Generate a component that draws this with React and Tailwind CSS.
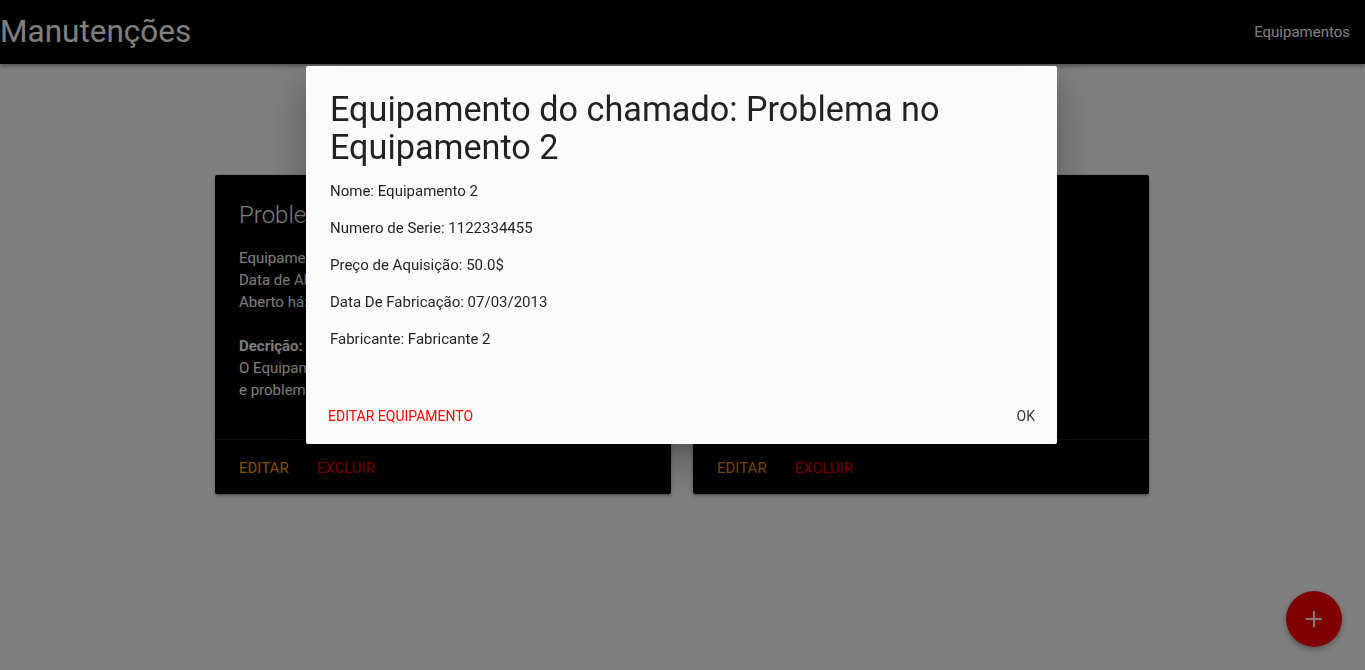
import React from 'react';

const chamados = [
  {
    id: 1,
    titulo: 'Problema no Equipamento 1',
    equipamento: 'Equipamento 1',
    abertura: '05/02/2019',
    aberto: '3 dias',
    descricao: ['O Equipamento 1 apresenta falhas constantes na operação', 'e problemas de aquecimento.'],
  },
  {
    id: 2,
    titulo: 'Problema no Equipamento 2',
    equipamento: 'Equipamento 2',
    abertura: '06/02/2019',
    aberto: '2 dias',
    descricao: ['O Equipamento 2 não liga', 'e problema na fonte.'],
  },
];

const detalhes = [
  'Nome: Equipamento 2',
  'Numero de Serie: 1122334455',
  'Preço de Aquisição: 50.0$',
  'Data De Fabricação: 07/03/2013',
  'Fabricante: Fabricante 2',
];

function ChamadoCard({ chamado }) {
  return (
    <div className="bg-black text-white rounded-[2px] shadow-[0_2px_2px_0_rgba(0,0,0,0.14),0_3px_1px_-2px_rgba(0,0,0,0.12),0_1px_5px_0_rgba(0,0,0,0.2)]">
      <div className="px-6 pt-6 pb-[38px] overflow-hidden">
        <div className="text-[24px] font-light leading-8 mb-4 whitespace-nowrap">{chamado.titulo}</div>
        <div className="text-[15px] leading-[22px] whitespace-nowrap">
          <p>Equipamento: {chamado.equipamento}</p>
          <p>Data de Abertura: {chamado.abertura}</p>
          <p>Aberto há: {chamado.aberto}</p>
          <p>&nbsp;</p>
          <p className="font-bold">Decrição:</p>
          <p>{chamado.descricao[0]}</p>
          <p>{chamado.descricao[1]}</p>
        </div>
      </div>
      <div className="border-t border-[rgba(160,160,160,0.2)] px-6 pt-[17px] pb-[15px] flex gap-7 text-[15px] leading-[22px] uppercase">
        <span className="text-[#ffa500]">Editar</span>
        <span className="text-[#ff0000]">Excluir</span>
      </div>
    </div>
  );
}

export default function App() {
  return (
    <div className="min-h-screen bg-white font-['Roboto',sans-serif] relative overflow-hidden">
      <nav className="h-16 bg-black text-white flex items-center justify-between shadow-[0_2px_4px_rgba(0,0,0,0.4)]">
        <span className="text-[31.5px] leading-[64px]">Manutenções</span>
        <span className="text-[15px] pr-[15px]">Equipamentos</span>
      </nav>

      <main className="w-[934px] ml-[215px] mt-[111px] grid grid-cols-2 gap-[22px]">
        {chamados.map(c => (
          <ChamadoCard key={c.id} chamado={c} />
        ))}
      </main>

      <button className="fixed right-[23px] bottom-[23px] w-14 h-14 rounded-full bg-[#ff0000] text-white flex items-center justify-center shadow-[0_3px_6px_rgba(0,0,0,0.3)]">
        <svg width="18" height="18" viewBox="0 0 18 18" fill="none" stroke="currentColor" strokeWidth="2">
          <path d="M9 1v16M1 9h16" />
        </svg>
      </button>

      {/* overlay */}
      <div className="fixed inset-0 bg-black/50"></div>

      <div className="fixed left-[306px] top-[66px] w-[751px] bg-[#fafafa] rounded-[2px] shadow-[0_24px_38px_3px_rgba(0,0,0,0.14),0_9px_46px_8px_rgba(0,0,0,0.12),0_11px_15px_-7px_rgba(0,0,0,0.2)] text-[rgba(0,0,0,0.87)]">
        <div className="p-6 pb-[38px]">
          <h4 className="text-[34.2px] leading-[38px] mb-[14px]">Equipamento do chamado: Problema no Equipamento 2</h4>
          <div className="flex flex-col gap-[15px] text-[15px] leading-[22px]">
            {detalhes.map(d => (
              <p key={d}>{d}</p>
            ))}
          </div>
        </div>
        <div className="h-14 px-[6px] flex items-center justify-between text-[14px] uppercase">
          <span className="px-4 h-9 leading-9 text-[#ff0000]">Editar Equipamento</span>
          <span className="px-4 h-9 leading-9 text-[#343434]">Ok</span>
        </div>
      </div>
    </div>
  );
}
